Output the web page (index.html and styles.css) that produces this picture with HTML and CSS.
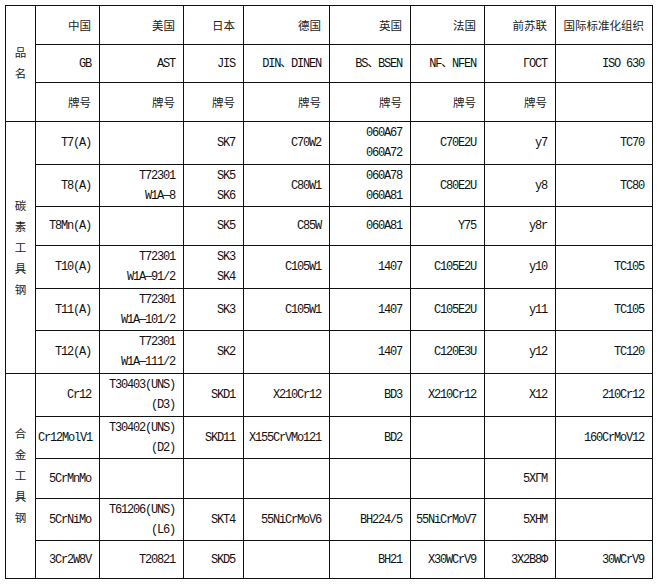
FILE: index.html
```html
<!DOCTYPE html>
<html lang="zh-CN">
<head>
<meta charset="utf-8">
<title>工具钢牌号对照</title>
<link rel="stylesheet" href="styles.css">
</head>
<body>
<table class="grid">
  <colgroup>
    <col class="c0"><col class="c1"><col class="c2"><col class="c3"><col class="c4">
    <col class="c5"><col class="c6"><col class="c7"><col class="c8">
  </colgroup>
  <tbody>
    <tr class="h39">
      <td class="side" rowspan="3"><span class="vt">品名</span></td>
      <td class="zh">中国</td><td class="zh">美国</td><td class="zh">日本</td><td class="zh">德国</td>
      <td class="zh">英国</td><td class="zh">法国</td><td class="zh">前苏联</td><td class="zh">国际标准化组织</td>
    </tr>
    <tr class="h38">
      <td>GB</td><td>AST</td><td>JIS</td><td>DIN、DINEN</td><td>BS、BSEN</td><td>NF、NFEN</td><td>ГOCT</td><td>ISO 630</td>
    </tr>
    <tr class="h39">
      <td class="zh">牌号</td><td class="zh">牌号</td><td class="zh">牌号</td><td class="zh">牌号</td>
      <td class="zh">牌号</td><td class="zh">牌号</td><td class="zh">牌号</td><td></td>
    </tr>

    <tr class="h43">
      <td class="side" rowspan="6"><span class="vt">碳素工具钢</span></td>
      <td>T7(A)</td><td></td><td>SK7</td><td>C70W2</td><td>060A67<br>060A72</td><td>C70E2U</td><td>y7</td><td>TC70</td>
    </tr>
    <tr class="h42">
      <td>T8(A)</td><td>T72301<br>W1A—8</td><td>SK5<br>SK6</td><td>C80W1</td><td>060A78<br>060A81</td><td>C80E2U</td><td>y8</td><td>TC80</td>
    </tr>
    <tr class="h39">
      <td>T8Mn(A)</td><td></td><td>SK5</td><td>C85W</td><td>060A81</td><td>Y75</td><td>y8r</td><td></td>
    </tr>
    <tr class="h43">
      <td>T10(A)</td><td>T72301<br>W1A—91/2</td><td>SK3<br>SK4</td><td>C105W1</td><td>1407</td><td>C105E2U</td><td>y10</td><td>TC105</td>
    </tr>
    <tr class="h42">
      <td>T11(A)</td><td>T72301<br>W1A—101/2</td><td>SK3</td><td>C105W1</td><td>1407</td><td>C105E2U</td><td>y11</td><td>TC105</td>
    </tr>
    <tr class="h43">
      <td>T12(A)</td><td>T72301<br>W1A—111/2</td><td>SK2</td><td></td><td>1407</td><td>C120E3U</td><td>y12</td><td>TC120</td>
    </tr>

    <tr class="h43">
      <td class="side" rowspan="5"><span class="vt">合金工具钢</span></td>
      <td>Cr12</td><td>T30403(UNS)<br>(D3)</td><td>SKD1</td><td>X210Cr12</td><td>BD3</td><td>X210Cr12</td><td>X12</td><td>210Cr12</td>
    </tr>
    <tr class="h42">
      <td>Cr12MolV1</td><td>T30402(UNS)<br>(D2)</td><td>SKD11</td><td>X155CrVMo121</td><td>BD2</td><td></td><td></td><td>160CrMoV12</td>
    </tr>
    <tr class="h40">
      <td>5CrMnMo</td><td></td><td></td><td></td><td></td><td></td><td>5XГM</td><td></td>
    </tr>
    <tr class="h42">
      <td>5CrNiMo</td><td>T61206(UNS)<br>(L6)</td><td>SKT4</td><td>55NiCrMoV6</td><td>BH224/5</td><td>55NiCrMoV7</td><td>5XHM</td><td></td>
    </tr>
    <tr class="h38">
      <td>3Cr2W8V</td><td>T20821</td><td>SKD5</td><td></td><td>BH21</td><td>X30WCrV9</td><td>3X2B8Ф</td><td>30WCrV9</td>
    </tr>
  </tbody>
</table>
</body>
</html>
```

FILE: styles.css
```css
html, body {
  margin: 0;
  padding: 0;
  background: #ffffff;
}

body {
  padding: 5px 0 0 5px;
}

.grid {
  border-collapse: collapse;
  table-layout: fixed;
  width: 647px;
  font-family: "Liberation Mono", "Noto Sans CJK SC", monospace;
  font-size: 12px;
  letter-spacing: -1.2px;
  color: #111;
}

.c0 { width: 30px; }
.c1 { width: 64px; }
.c2 { width: 84px; }
.c3 { width: 60px; }
.c4 { width: 86px; }
.c5 { width: 81px; }
.c6 { width: 74px; }
.c7 { width: 71px; }
.c8 { width: 97px; }

.grid td {
  border: 1.5px solid #111;
  padding: 0 8px 0 2px;
  text-align: right;
  vertical-align: middle;
  line-height: 20px;
  white-space: nowrap;
  overflow: visible;
}

.grid td.zh {
  font-family: "Noto Sans CJK SC", sans-serif;
  letter-spacing: 0;
  font-size: 11.5px;
  color: #222;
}

.grid td.side {
  text-align: center;
  padding: 0;
  white-space: normal;
}

.vt {
  display: inline-block;
  width: 12px;
  font-family: "Noto Sans CJK SC", sans-serif;
  letter-spacing: 0;
  font-size: 11.5px;
  line-height: 21px;
  color: #222;
  white-space: normal;
  word-break: break-all;
}

.h38 { height: 38px; }
.h39 { height: 39px; }
.h40 { height: 40px; }
.h42 { height: 42px; }
.h43 { height: 43px; }
```
